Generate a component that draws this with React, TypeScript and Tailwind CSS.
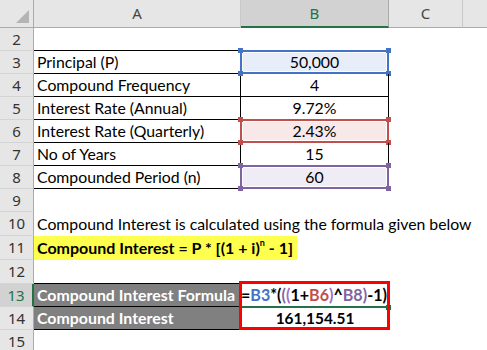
import React from 'react';

const cols = 'grid grid-cols-[34px_207px_148px_74px_1fr]';
const body = "font-['Lato',sans-serif] text-[15.8px] leading-none text-black";

type Mark = { border: string; fill: string };

const blue: Mark = { border: 'border-[#4472c4]', fill: 'bg-[#e8eef9]' };
const red: Mark = { border: 'border-[#c0504d]', fill: 'bg-[#f9e8e8]' };
const purple: Mark = { border: 'border-[#8064a2]', fill: 'bg-[#f0ecf6]' };
const sq: Record<string, string> = {
  'border-[#4472c4]': 'bg-[#4472c4]',
  'border-[#c0504d]': 'bg-[#c0504d]',
  'border-[#8064a2]': 'bg-[#8064a2]',
};

const RowHead = ({ n, active }: { n: number; active?: boolean }) => (
  <div
    className={`flex items-center justify-center font-['Noto_Sans',sans-serif] text-[15px] leading-none font-normal border-b border-[#d4d4d4] ${
      active
        ? 'bg-[#d2d2d2] text-[#217346] border-r-2 border-r-[#217346]'
        : 'bg-[#e6e6e6] text-[#333] border-r border-r-[#ababab]'
    }`}
  >
    {n}
  </div>
);

// Range highlight drawn by Excel while the formula is being edited
const RefBox = ({ m }: { m: Mark }) => (
  <div className={`absolute -inset-px border-2 ${m.border}`}>
    <div className={`w-full h-full border border-white ${m.fill}`} />
    <span className={`absolute -left-[4px] -top-[4px] w-[5px] h-[5px] ${sq[m.border]}`} />
    <span className={`absolute -right-[4px] -top-[4px] w-[5px] h-[5px] ${sq[m.border]}`} />
    <span className={`absolute -left-[4px] -bottom-[4px] w-[5px] h-[5px] ${sq[m.border]}`} />
    <span className={`absolute -right-[4px] -bottom-[4px] w-[5px] h-[5px] ${sq[m.border]}`} />
  </div>
);

const tableRows: { n: number; label: string; value: string; mark?: Mark }[] = [
  { n: 3, label: 'Principal (P)', value: '50,000', mark: blue },
  { n: 4, label: 'Compound Frequency', value: '4' },
  { n: 5, label: 'Interest Rate (Annual)', value: '9.72%' },
  { n: 6, label: 'Interest Rate (Quarterly)', value: '2.43%', mark: red },
  { n: 7, label: 'No of Years', value: '15' },
  { n: 8, label: 'Compounded Period (n)', value: '60', mark: purple },
];

export default function App() {
  return (
    <div className="w-[487px] h-[350px] overflow-hidden bg-white select-none">
      {/* column headers */}
      <div className={`${cols} h-[28px] bg-[#e6e6e6] font-['Noto_Sans',sans-serif] text-[15px] leading-none text-[#444]`}>
        <div className="relative border-r border-b border-[#ababab]">
          <svg className="absolute left-0 top-0" width="33" height="27" viewBox="0 0 33 27">
            <polygon points="16,23 29,23 29,10" fill="#b4b4b4" />
          </svg>
        </div>
        <div className="flex items-center justify-center border-r border-r-[#c8c8c8] border-b border-b-[#ababab]">A</div>
        <div className="flex items-center justify-center bg-[#d2d2d2] text-[#217346] border-r border-r-[#ababab] border-b-2 border-b-[#217346]">
          B
        </div>
        <div className="flex items-center justify-center border-r border-r-[#c8c8c8] border-b border-b-[#ababab]">C</div>
        <div className="border-b border-[#ababab]" />
      </div>

      {/* row 2 */}
      <div className={`${cols} ${body} h-[23px]`}>
        <RowHead n={2} />
        <div className="border-b border-black" />
        <div className="border-b border-black" />
      </div>

      {tableRows.map(r => (
        <div key={r.n} className={`${cols} ${body} h-[23px]`}>
          <RowHead n={r.n} />
          <div className="flex items-center pl-[3px] border-b border-r border-black whitespace-nowrap">{r.label}</div>
          <div className="relative flex items-center justify-center border-b border-r border-black">
            {r.mark && <RefBox m={r.mark} />}
            <span className="relative">{r.value}</span>
          </div>
        </div>
      ))}

      {/* row 9 */}
      <div className={`${cols} ${body} h-[23px]`}>
        <RowHead n={9} />
      </div>

      {/* row 10 */}
      <div className={`${cols} ${body} h-[24px]`}>
        <RowHead n={10} />
        <div className="flex items-center pl-[3px] whitespace-nowrap">
          Compound Interest is calculated using the formula given below
        </div>
      </div>

      {/* row 11 */}
      <div className={`${cols} ${body} h-[24px]`}>
        <RowHead n={11} />
        <div className="whitespace-nowrap">
          <div className="h-full w-[263px] bg-[#ffff4d] flex items-center pl-[3px] font-bold text-[16px]">
            Compound Interest = P * [(1 + i)
            <span className="text-[9px] relative -top-[6px]">n</span>
            &nbsp;- 1]
          </div>
        </div>
      </div>

      {/* row 12 */}
      <div className={`${cols} ${body} h-[24px]`}>
        <RowHead n={12} />
        <div className="border-b border-black" />
      </div>

      {/* row 13 */}
      <div className={`${cols} ${body} h-[23px] font-bold`}>
        <RowHead n={13} active />
        <div className="flex items-center pl-[3px] bg-[#808080] text-white border-b border-r border-black whitespace-nowrap text-[15.9px]">
          Compound Interest Formula
        </div>
        <div className="relative flex items-center whitespace-nowrap">
          <span className="absolute left-[1px] right-[3px] -bottom-px h-[2px] bg-[#217346]" />
          <span className="absolute -right-[2px] -bottom-[3px] w-[5px] h-[5px] bg-[#217346]" />
          <span className="text-[16.1px]">
            =<span className="text-[#4472c4]">B3</span>*(<span className="text-[#8064a2]">(</span>
            <span className="text-[#9a6fc7]">(</span>1+<span className="text-[#c0504d]">B6</span>
            <span className="text-[#9a6fc7]">)</span>^<span className="text-[#8064a2]">B8</span>
            <span className="text-[#8064a2]">)</span>-1)
          </span>
          <div className="absolute -left-[2px] -top-[3px] w-[151px] h-[49px] border-[3px] border-[#ff0000]" />
        </div>
      </div>

      {/* row 14 */}
      <div className={`${cols} ${body} h-[23px] font-bold`}>
        <RowHead n={14} />
        <div className="flex items-center pl-[3px] bg-[#808080] text-white border-b border-r border-black whitespace-nowrap text-[15.9px]">
          Compound Interest
        </div>
        <div className="flex items-center justify-center text-[15.4px]">161,154.51</div>
      </div>

      {/* row 15 */}
      <div className={`${cols} ${body} h-[23px]`}>
        <RowHead n={15} />
      </div>
    </div>
  );
}
